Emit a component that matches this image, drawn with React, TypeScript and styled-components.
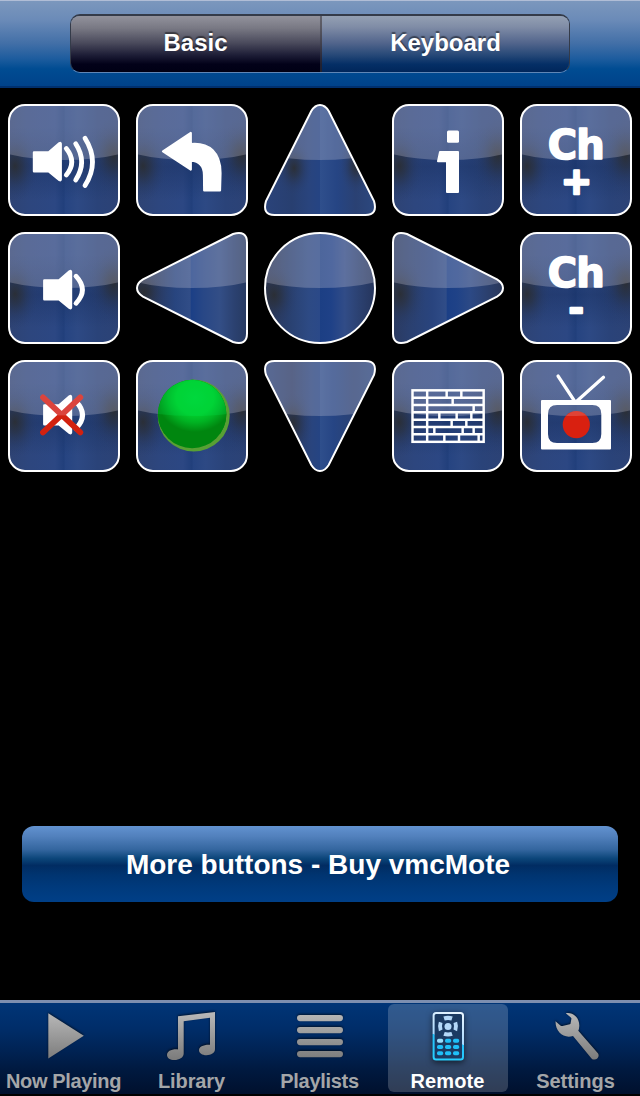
import React, { useId } from 'react';
import styled, { createGlobalStyle } from 'styled-components';

const GlobalStyle = createGlobalStyle`
  body { margin: 0; background: #000; }
  * { box-sizing: border-box; }
  button { border: 0; padding: 0; margin: 0; background: none; font: inherit; color: inherit; }
`;

const Screen = styled.div`
  width: 640px;
  height: 1096px;
  display: flex;
  flex-direction: column;
  background: #000;
  font-family: 'Liberation Sans', Arial, sans-serif;
  font-weight: bold;
  overflow: hidden;
`;

const Toolbar = styled.header`
  height: 88px;
  flex: none;
  display: flex;
  justify-content: center;
  padding-top: 13px;
  border-top: 1px solid #b0bdd6;
  border-bottom: 2px solid #00306e;
  background: linear-gradient(#7b97bd 0%, #6b8bb8 22%, #426fa7 50%, #1d5c9e 68%, #004c92 80%, #00428a 100%);
`;

const Segments = styled.div`
  display: flex;
  width: 500px;
  height: 59px;
  border-radius: 10px;
  overflow: hidden;
  border: 1px solid #343b49;
  border-top-width: 2px;
  border-bottom: 1px solid #5f86b6;
`;

const Segment = styled.button<{ $active?: boolean }>`
  width: ${p => (p.$active ? 251 : 247)}px;
  flex: none;
  border-right: ${p => (p.$active ? '2px solid rgba(60,60,70,.55)' : '0')};
  background: ${p =>
    p.$active
      ? 'linear-gradient(#92929c 0%, #787883 22%, #4a4a5c 48%, #1d1d36 70%, #020119 86%, #000014 100%)'
      : 'linear-gradient(#94a0b3 0%, #7f8ca6 20%, #52658c 48%, #264877 70%, #052f66 86%, #00265a 100%)'};
  color: #fff;
  font-size: 24px;
  line-height: 52px;
  padding-bottom: 3px;
  text-shadow: 0 -2px 1px rgba(0, 0, 0, 0.45);
`;

const Keypad = styled.main`
  display: grid;
  grid-template-columns: repeat(5, 112px);
  grid-auto-rows: 112px;
  gap: 16px;
  padding: 16px 8px;
`;

const Key = styled.button`
  width: 112px;
  height: 112px;
  svg { display: block; }
`;

const BuyButton = styled.button`
  margin: auto 22px 98px;
  height: 76px;
  flex: none;
  padding: 2px 4px 0 0;
  border-radius: 12px;
  background: linear-gradient(#6292d0 0%, #5180bc 14%, #34669f 31%, #0b4579 43%, #012c62 52%, #003470 64%, #003a7c 80%, #003f87 100%);
  color: #fff;
  font-size: 28px;
  line-height: 74px;
  text-align: center;
`;

const TabBar = styled.nav`
  height: 96px;
  flex: none;
  display: flex;
  border-top: 3px solid #7d8fb0;
  border-bottom: 2px solid #000;
  background: linear-gradient(#003577 0%, #002d69 28%, #002354 52%, #00193f 74%, #00102d 100%);
`;

const Tab = styled.button<{ $active?: boolean }>`
  width: 120px;
  height: 88px;
  margin: 1px 4px 0;
  border-radius: 6px;
  display: flex;
  flex-direction: column;
  align-items: center;
  background: ${p => (p.$active ? 'rgba(255,255,255,.19)' : 'none')};
  color: ${p => (p.$active ? '#fff' : '#a4a6a8')};
  svg {
    flex: none;
    filter: drop-shadow(0 ${p => (p.$active ? '2px 3px' : '-1px 1px')} rgba(0, 0, 0, 0.6));
  }
`;

const TabLabel = styled.span<{ $spacing: number }>`
  font-size: 20px;
  line-height: 24px;
  margin-top: 3px;
  padding-right: 1px;
  white-space: nowrap;
  letter-spacing: ${p => p.$spacing}px;
`;

type Shape = 'square' | 'circle' | 'up' | 'down' | 'left' | 'right';

const TRIANGLE =
  'M47.3 7 Q51 1 56 1 Q61 1 64.7 7 L110 97 Q114 111 101.5 111 L10.5 111 Q-2 111 2 97 Z';
const TURN = { up: 0, right: 90, down: 180, left: 270 };

const Outline = ({ shape, ...rest }: { shape: Shape } & React.SVGProps<any>) => {
  if (shape === 'square') return <rect x="1" y="1" width="110" height="110" rx="16" {...rest} />;
  if (shape === 'circle') return <circle cx="56" cy="56" r="55" {...rest} />;
  return <path d={TRIANGLE} transform={`rotate(${TURN[shape]} 56 56)`} {...rest} />;
};

const SHADE: Record<Shape, [number, string][]> = {
  square: [[0, '#2e4373'], [0.2, '#2d467e'], [0.42, '#2c4783'], [0.5, '#213f7b'], [0.51, '#264481'], [0.62, '#2d4984'], [0.8, '#2a4379'], [1, '#2c4275']],
  circle: [[0, '#2b3553'], [0.22, '#29406f'], [0.4, '#2d4a84'], [0.499, '#2b4988'], [0.5, '#1c3f84'], [0.6, '#1f4187'], [0.72, '#314c87'], [0.86, '#2b406f'], [1, '#25345a']],
  up: [[0, '#2a437a'], [0.25, '#283f70'], [0.4, '#29447d'], [0.499, '#254483'], [0.5, '#2f4f8c'], [0.65, '#264584'], [0.82, '#2a4173'], [1, '#2c487f']],
  down: [[0, '#2a437a'], [0.25, '#2a3b66'], [0.42, '#29447d'], [0.499, '#254483'], [0.5, '#2f4f8c'], [0.62, '#264584'], [0.8, '#2a4173'], [1, '#2c487f']],
  left: [[0, '#272e40'], [0.15, '#2a395c'], [0.35, '#28457f'], [0.485, '#314d87'], [0.49, '#1b3f86'], [0.6, '#284786'], [0.75, '#334e86'], [0.88, '#2b4170'], [1, '#26395f']],
  right: [[0, '#2b3a60'], [0.16, '#2a4070'], [0.36, '#29447e'], [0.485, '#304d88'], [0.49, '#1b3f86'], [0.58, '#1f4287'], [0.7, '#2c4985'], [1, '#2a3758']],
};

const BLOTCHES: Record<Shape, [number, number, number, number][]> = {
  square: [[7, 62, 24, 36], [106, 52, 26, 38]],
  circle: [[10, 63, 24, 34]],
  up: [[30, 64, 18, 28], [92, 62, 16, 28]],
  down: [[29, 63, 20, 34]],
  left: [[8, 60, 24, 26]],
  right: [[8, 62, 26, 38]],
};

const GlossyKey = ({ shape = 'square', label, children }: { shape?: Shape; label: string; children?: React.ReactNode }) => {
  const id = useId().replace(/[^a-zA-Z0-9]/g, '');
  return (
    <Key aria-label={label}>
      <svg width="112" height="112" viewBox="0 0 112 112">
        <defs>
          <clipPath id={`c${id}`}><Outline shape={shape} /></clipPath>
          <linearGradient id={`g${id}`}>
            {SHADE[shape].map(([o, c]) => <stop key={o} offset={o} stopColor={c} />)}
          </linearGradient>
          <radialGradient id={`b${id}`}>
            <stop offset="0" stopColor="#2b2d30" stopOpacity=".88" />
            <stop offset=".3" stopColor="#2a303c" stopOpacity=".62" />
            <stop offset=".65" stopColor="#283759" stopOpacity=".3" />
            <stop offset="1" stopColor="#2a3f70" stopOpacity="0" />
          </radialGradient>
          <linearGradient id={`v${id}`} x1="0" y1="0" x2="0" y2="1">
            <stop offset=".2" stopColor="#142a58" stopOpacity="0" />
            <stop offset=".56" stopColor="#142a58" stopOpacity=".38" />
            <stop offset=".85" stopColor="#142a58" stopOpacity="0" />
          </linearGradient>
        </defs>
        <g clipPath={`url(#c${id})`}>
          <rect width="112" height="112" fill={`url(#g${id})`} />
          {shape === 'square' && <rect width="112" height="112" fill={`url(#v${id})`} />}
          {BLOTCHES[shape].map(([cx, cy, rx, ry]) => (
            <ellipse key={cx} cx={cx} cy={cy} rx={rx} ry={ry} fill={`url(#b${id})`} />
          ))}
          <path d="M0 0 H112 V50 Q88 56 56 56 Q24 56 0 50 Z" fill="#dcd8e4" fillOpacity=".26" />
          {children}
        </g>
        <Outline shape={shape} fill="none" stroke="#fff" strokeWidth="2" />
      </svg>
    </Key>
  );
};

const Speaker = ({ x = 0, y = 0 }) => (
  <path
    transform={`translate(${x} ${y})`}
    d="M26 48.5 H40.8 L51.5 39.2 Q52.7 38.6 52.7 39.7 V75.5 Q52.7 76.6 51.5 76 L40.8 67.2 H26 Z"
    fill="#fff" stroke="#fff" strokeWidth="2.4" strokeLinejoin="round"
  />
);

const Waves = ({ d, width = 4.8 }: { d: string; width?: number }) => (
  <path d={d} fill="none" stroke="#fff" strokeWidth={width} strokeLinecap="round" />
);

const KeyText = styled.text`
  font-family: 'DejaVu Sans', sans-serif;
  font-weight: bold;
  fill: #fff;
  stroke: #fff;
  stroke-width: 1.6px;
  stroke-linejoin: round;
`;

const Sign = styled.tspan`
  stroke-width: 2.6px;
`;

const ChannelText = ({ sign, x, y, size }: { sign: string; x: number; y: number; size: number }) => (
  <KeyText x="27.7" y="55.4" fontSize="40">
    <tspan letterSpacing="-0.8">Ch</tspan>
    <Sign x={x} y={y} fontSize={size}>{sign}</Sign>
  </KeyText>
);

const JOINTS = [[572, 616], [590], [653], [550, 602, 646], [587, 631], [535, 620, 653], [565, 609, 668]];

const Guide = () => (
  <g transform="translate(-136 -8) scale(.33333)" stroke="#fff" strokeWidth="7.4" fill="none">
    <rect x="469.5" y="115" width="213.5" height="154.5" />
    <path d="M513.5 115V269" />
    {[137, 159, 181, 203, 225, 247].map(y => <path key={y} d={`M469 ${y}H683`} />)}
    {JOINTS.map((row, i) => row.map(x => <path key={`${i}-${x}`} d={`M${x} ${115 + i * 22}v22`} />))}
  </g>
);

const GreenBall = () => (
  <g>
    <defs>
      <clipPath id="ballClip"><circle cx="56.2" cy="54" r="34.2" /></clipPath>
      <clipPath id="ballTop"><path d="M0 0 H112 V50 Q88 56 56 56 Q24 56 0 50 Z" /></clipPath>
      <radialGradient id="shine" gradientUnits="userSpaceOnUse" cx="0" cy="0" r="1" gradientTransform="translate(59 38) scale(38 34)">
        <stop offset="0" stopColor="#00d235" />
        <stop offset=".5" stopColor="#00cc2c" />
        <stop offset=".72" stopColor="#00b222" />
        <stop offset="1" stopColor="#00860f" />
      </radialGradient>
    </defs>
    <circle cx="57.7" cy="55.6" r="36" fill="#58a034" />
    <g clipPath="url(#ballClip)">
      <rect x="20" y="18" width="74" height="74" fill="#00860f" />
      <rect x="20" y="4" width="80" height="70" fill="url(#shine)" />
      <rect x="20" y="18" width="74" height="74" fill="#00f060" fillOpacity=".2" clipPath="url(#ballTop)" />
    </g>
  </g>
);

const Television = () => (
  <g>
    <path d="M38 16 L54.5 41 M83.5 17.3 L57 41" stroke="#fff" strokeWidth="3.2" strokeLinecap="round" />
    <path
      fillRule="evenodd" fill="#fff"
      d="M22 40 H90 Q91 40 91 41 V88.5 Q91 89.5 90 89.5 H22 Q21 89.5 21 88.5 V41 Q21 40 22 40Z M37 45 Q28 45 28 54 V74 Q28 83 37 83 H72.3 Q81.3 83 81.3 74 V54 Q81.3 45 72.3 45Z"
    />
    <circle cx="56.3" cy="64.6" r="13.6" fill="#d92010" />
    <path d="M46 56 A13.6 13.6 0 0 1 66.6 55.6 Q62 56 56 56Z" fill="#fff" fillOpacity=".16" />
  </g>
);

const MuteCross = () => (
  <g>
    <defs>
      <linearGradient id="cross" gradientUnits="userSpaceOnUse" x1="0" y1="34" x2="0" y2="75">
        <stop offset=".5" stopColor="#db443d" />
        <stop offset=".54" stopColor="#d2210f" />
      </linearGradient>
    </defs>
    <path d="M35 37.4L72.3 72.4M72.3 37.4L35 72.4" stroke="url(#cross)" strokeWidth="5.8" strokeLinecap="round" />
  </g>
);

const TabIcon = ({ children }: { children: React.ReactNode }) => (
  <svg width="120" height="62" viewBox="4 0 120 62" fill="url(#metal)">
    <defs>
      <linearGradient id="metal" gradientUnits="userSpaceOnUse" x1="0" y1="8" x2="0" y2="56">
        <stop offset="0" stopColor="#b9b9b9" />
        <stop offset="1" stopColor="#7b7b7b" />
      </linearGradient>
    </defs>
    {children}
  </svg>
);

const RemoteIcon = () => (
  <g>
    <defs>
      <linearGradient id="remote" gradientUnits="userSpaceOnUse" x1="70" y1="8" x2="53" y2="56">
        <stop offset="0" stopColor="#e6f4ff" />
        <stop offset=".54" stopColor="#a9d9ff" />
        <stop offset=".55" stopColor="#25c2fa" />
        <stop offset="1" stopColor="#27d0ff" />
      </linearGradient>
    </defs>
    <rect x="49.6" y="9" width="29.4" height="46.4" rx="2.5" fill="#1b3a62" stroke="url(#remote)" strokeWidth="2" />
    <g fill="#b4d8f8">
      <circle cx="64" cy="22.4" r="3.5" />
      <path d="M59.4 12.6 Q64 11 68.7 12.6 L67.4 16.6 Q64 15.6 60.7 16.6Z" />
      <path d="M59.4 31.8 Q64 33.4 68.7 31.8 L67.4 28.1 Q64 29 60.7 28.1Z" />
      <path d="M54.9 17.7 L58.5 19 Q57.4 22.4 58.5 25.6 L54.9 27.2 Q53.1 22.4 54.9 17.7Z" />
      <path d="M73.1 17.7 L69.5 19 Q70.6 22.4 69.5 25.6 L73.1 27.2 Q74.9 22.4 73.1 17.7Z" />
    </g>
    {[36.7, 43, 49.3].map((y, r) =>
      [56, 64, 72].map((x, c) => (
        <rect key={`${x}${y}`} x={x - 3} y={y - 2} width="6.2" height="4" rx="1.7"
          fill={r === 0 && c === 0 ? '#9bddfb' : '#1fbff8'} />
      ))
    )}
  </g>
);

const TABS = [
  { label: 'Now Playing', spacing: -0.35, icon: <path d="M48.3 9.3 L83.8 31.8 L48.3 54.5Z" /> },
  {
    label: 'Library', spacing: -0.1,
    icon: (
      <path d="M50 12.3 L87 8 V45 C87 49 83 51.2 78.5 51.2 C74 51.2 71 49 71 46.2 C71 42.8 75 40.5 82 40.7 V13.7 L55.7 17.3 V49.5 C55.7 53.8 51 56 46.5 56 C42 56 39 54 39 51 C39 47.5 43 45 50 45.4Z" />
    ),
  },
  {
    label: 'Playlists', spacing: -0.3,
    icon: <>{[11, 23, 35, 47].map(y => <rect key={y} x="41" y={y} width="46" height="6.2" rx="3.1" />)}</>,
  },
  { label: 'Remote', spacing: 0.1, active: true, icon: <RemoteIcon /> },
  {
    label: 'Settings', spacing: -0.05,
    icon: (
      <path d="M53.8 9.2 C62 8 67.5 14.5 67.3 22 Q67.2 24.8 66.3 26.8 L85.9 49.3 C88.7 53 82.8 57.8 79.5 54.4 L61 32 C52 34.8 43.3 28.5 43.5 17.2 L48.7 21.7 Q49.5 22.3 50.5 22 L57.8 20.2 Q58.5 20 58.6 19.2 L59.4 14.8 Q59.5 14 58.8 13.4Z" />
    ),
  },
];

export default function App() {
  return (
    <Screen>
      <GlobalStyle />
      <Toolbar>
        <Segments>
          <Segment $active>Basic</Segment>
          <Segment>Keyboard</Segment>
        </Segments>
      </Toolbar>
      <Keypad>
        <GlossyKey label="Volume up">
          <Speaker />
          <Waves d="M58.3 44.5Q69.2 58 58.3 71M67.7 39.8Q79.6 58 67.7 76M77 34.2Q92 58 77 81.5" />
        </GlossyKey>
        <GlossyKey label="Back">
          <path
            d="M27 47.3 L54.8 29 V40 C73.5 38.3 84.5 49 84.5 69 L84 86.4 H68.2 L68 71 C68 62 63.5 57.2 54.8 56.7 V65.6Z"
            fill="#fff" stroke="#fff" strokeWidth="2.2" strokeLinejoin="round"
          />
        </GlossyKey>
        <GlossyKey shape="up" label="Up" />
        <GlossyKey label="Info">
          <rect x="55" y="26.5" width="12" height="12.3" rx="1.5" fill="#fff" />
          <path d="M48 48 H66 V88 H55 V57.3 H46Z" fill="#fff" stroke="#fff" strokeWidth="2" strokeLinejoin="round" />
        </GlossyKey>
        <GlossyKey label="Channel up">
          <ChannelText sign="+" x={41} y={89.8} size={37} />
        </GlossyKey>

        <GlossyKey label="Volume down">
          <Speaker x={10.3} />
          <Waves d="M68 44.2Q80.8 58 68 71.3" />
        </GlossyKey>
        <GlossyKey shape="left" label="Left" />
        <GlossyKey shape="circle" label="Select" />
        <GlossyKey shape="right" label="Right" />
        <GlossyKey label="Channel down">
          <ChannelText sign="-" x={48.8} y={89.3} size={36} />
        </GlossyKey>

        <GlossyKey label="Mute">
          <Speaker x={10.3} y={-3} />
          <Waves d="M68 41.5Q81 55 68 68.5" width={5} />
          <MuteCross />
        </GlossyKey>
        <GlossyKey label="Start"><GreenBall /></GlossyKey>
        <GlossyKey shape="down" label="Down" />
        <GlossyKey label="Guide"><Guide /></GlossyKey>
        <GlossyKey label="Record TV"><Television /></GlossyKey>
      </Keypad>
      <BuyButton>More buttons - Buy vmcMote</BuyButton>
      <TabBar>
        {TABS.map(t => (
          <Tab key={t.label} $active={t.active}>
            <TabIcon>{t.icon}</TabIcon>
            <TabLabel $spacing={t.spacing}>{t.label}</TabLabel>
          </Tab>
        ))}
      </TabBar>
    </Screen>
  );
}
